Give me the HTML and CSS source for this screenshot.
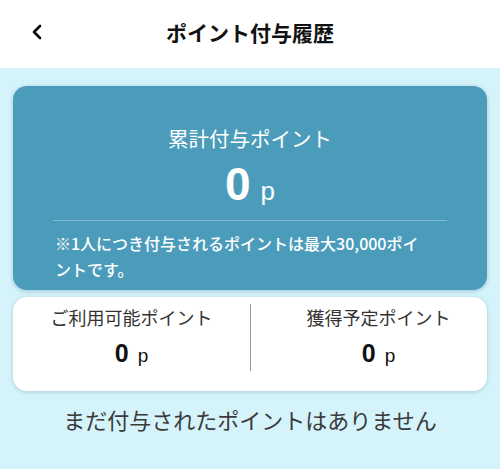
FILE: index.html
```html
<!DOCTYPE html>
<html lang="ja">
<head>
<meta charset="utf-8">
<link rel="stylesheet" href="styles.css">
</head>
<body>
<header class="topbar">
  <div class="back">
    <svg width="12" height="16" viewBox="0 0 12 16"><path d="M9 2 L3 8 L9 14" fill="none" stroke="#000" stroke-width="2.6" stroke-linecap="round" stroke-linejoin="round"/></svg>
  </div>
  <h1 class="title">ポイント付与履歴</h1>
  <div></div>
</header>
<main class="content">
  <section class="total-card">
    <div class="total-label">累計付与ポイント</div>
    <div class="total-value"><span class="num">0</span><span class="unit">p</span></div>
    <div class="total-note">※1人につき付与されるポイントは最大30,000ポイントです。</div>
  </section>
  <section class="sub-card">
    <div class="col col-left">
      <div class="col-label">ご利用可能ポイント</div>
      <div class="col-value"><span class="num">0</span><span class="unit">p</span></div>
    </div>
    <div class="col col-right">
      <div class="col-label">獲得予定ポイント</div>
      <div class="col-value"><span class="num">0</span><span class="unit">p</span></div>
    </div>
  </section>
  <p class="empty">まだ付与されたポイントはありません</p>
</main>
</body>
</html>
```
FILE: styles.css
```css
html, body {
  margin: 0;
  padding: 0;
}
body {
  background: #d4f3fa;
  font-family: "Noto Sans CJK JP", "Noto Sans", sans-serif;
  color: #222;
  width: 500px;
  height: 469px;
  overflow: hidden;
}
.topbar {
  height: 68px;
  background: #fff;
  display: grid;
  grid-template-columns: 1fr auto 1fr;
  align-items: center;
}
.back {
  padding-left: 31px;
  display: flex;
  align-items: center;
  padding-bottom: 4px;
}
.title {
  margin: 0;
  font-size: 21px;
  font-weight: 700;
  color: #111;
  line-height: 30px;
  padding-bottom: 4px;
}
.content {
  padding: 18px 13px 0;
}
.total-card {
  background: #4b9cbb;
  border-radius: 14px;
  box-shadow: 0 1px 4px rgba(0, 60, 90, 0.25);
  padding: 37px 40px 8px;
  color: #fff;
  text-align: center;
}
.total-label {
  font-size: 20.5px;
  line-height: 30px;
  font-weight: 400;
}
.total-value {
  margin-top: 6px;
  line-height: 50px;
  height: 50px;
  border-bottom: 1px solid rgba(255, 255, 255, 0.3);
  padding-bottom: 11px;
  box-sizing: content-box;
}
.total-value .num {
  font-family: "Liberation Sans", Arial, sans-serif;
  font-size: 46px;
  font-weight: 700;
}
.total-value .unit {
  font-family: "Liberation Sans", Arial, sans-serif;
  font-size: 26px;
  margin-left: 10px;
}
.total-note {
  margin: 9px 13px 0 2px;
  text-align: left;
  font-size: 16px;
  line-height: 26px;
  font-weight: 500;
}
.sub-card {
  margin-top: 7px;
  background: #fff;
  border-radius: 14px;
  box-shadow: 0 1px 4px rgba(0, 60, 90, 0.2);
  display: grid;
  grid-template-columns: 1fr 1fr;
  padding: 7px 0 20px;
}
.col {
  text-align: center;
}
.col-right {
  border-left: 1.5px solid #9a9a9a;
  padding-left: 19px;
}
.col-label {
  font-size: 18px;
  line-height: 26px;
  color: #333;
}
.col-value {
  margin-top: 8px;
  line-height: 30px;
  color: #111;
}
.col-value .num {
  font-family: "Liberation Sans", Arial, sans-serif;
  font-size: 25px;
  font-weight: 700;
}
.col-value .unit {
  font-family: "Liberation Sans", Arial, sans-serif;
  font-size: 19px;
  margin-left: 9px;
}
.empty {
  margin: 13px 0 0;
  text-align: center;
  font-size: 22px;
  line-height: 30px;
  color: #3a3a3a;
}
```
